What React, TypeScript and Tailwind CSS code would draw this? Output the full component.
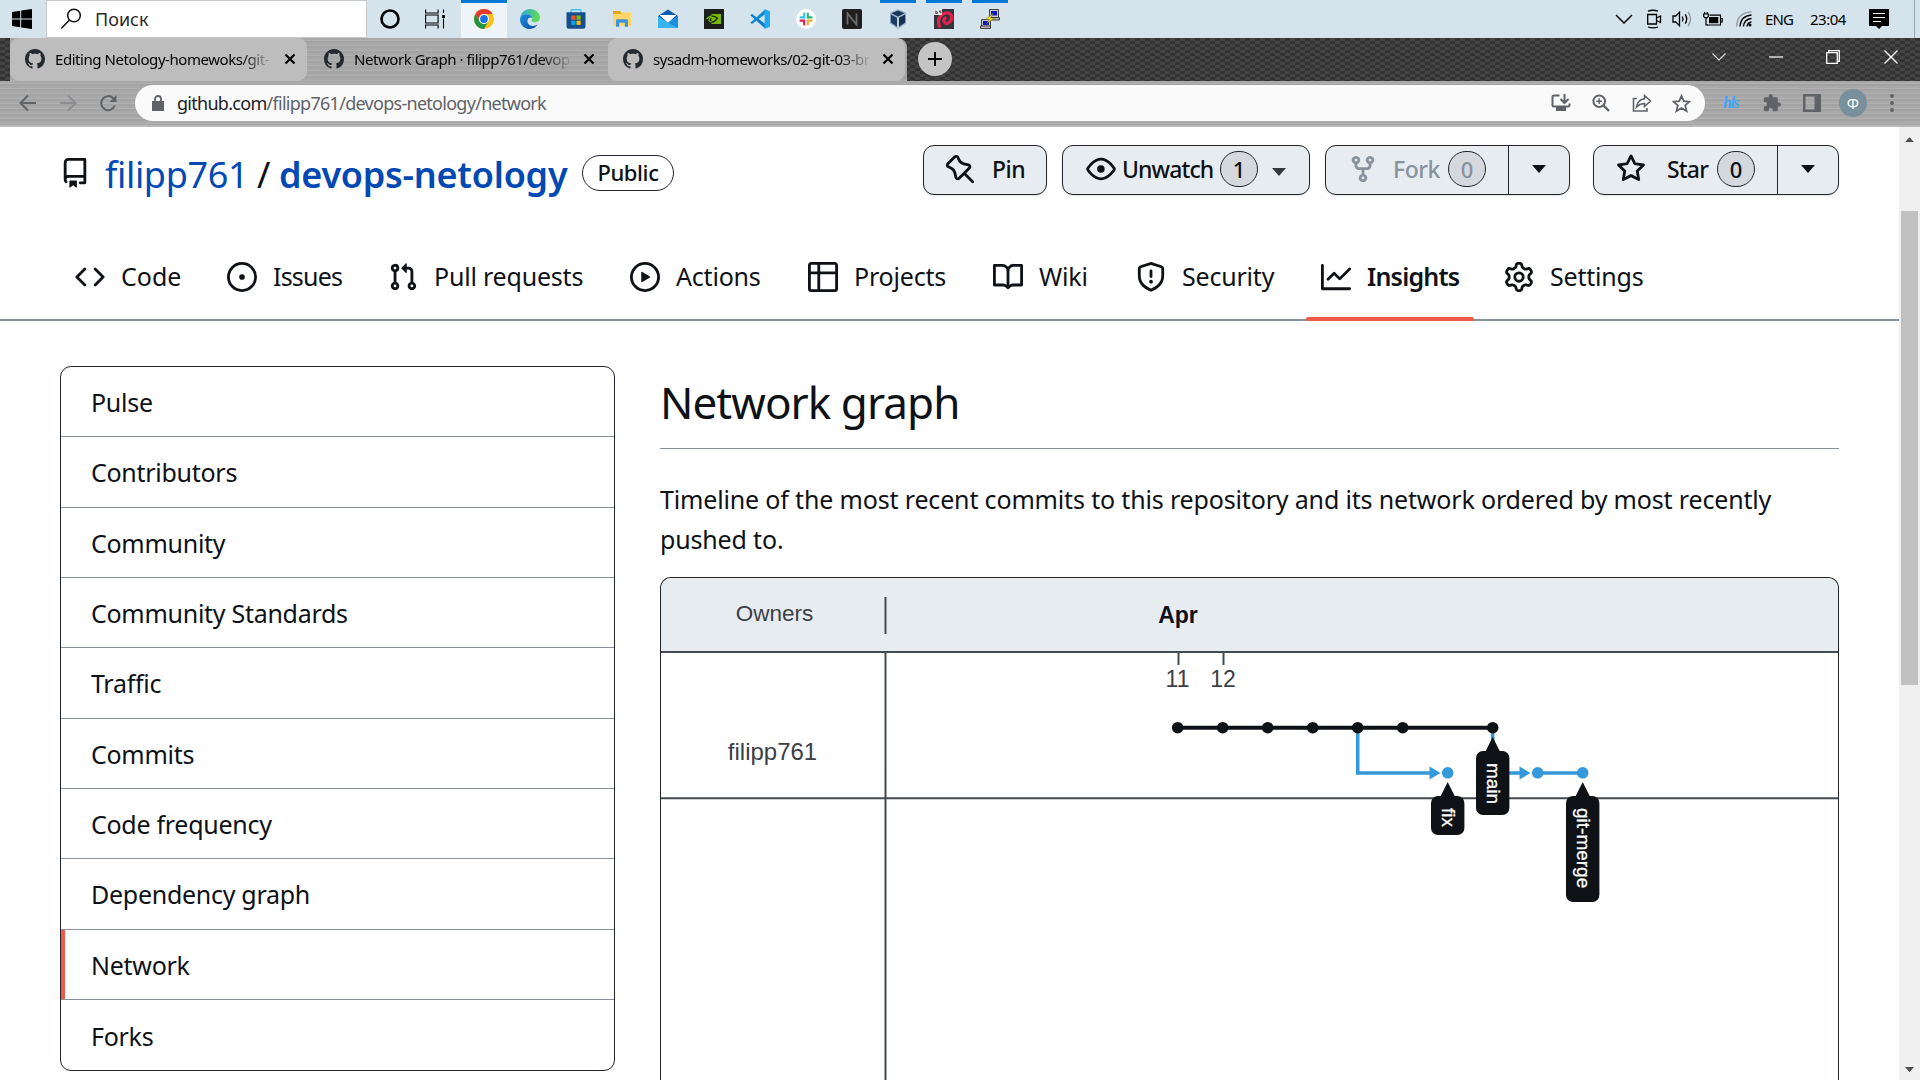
import type { ReactNode } from "react";

const octicons = {
  mark: "M8 0c4.42 0 8 3.58 8 8a8.013 8.013 0 0 1-5.45 7.59c-.4.08-.55-.17-.55-.38 0-.27.01-1.13.01-2.2 0-.75-.25-1.23-.54-1.48 1.78-.2 3.65-.88 3.65-3.95 0-.88-.31-1.59-.82-2.15.08-.2.36-1.02-.08-2.12 0 0-.67-.22-2.2.82-.64-.18-1.32-.27-2-.27-.68 0-1.36.09-2 .27-1.53-1.03-2.2-.82-2.2-.82-.44 1.1-.16 1.92-.08 2.12-.51.56-.82 1.28-.82 2.15 0 3.06 1.86 3.75 3.64 3.95-.23.2-.44.55-.51 1.07-.46.21-1.61.55-2.33-.66-.15-.24-.6-.83-1.23-.82-.67.01-.27.38.01.53.34.19.73.9.82 1.13.16.45.68 1.31 2.69.94 0 .67.01 1.3.01 1.49 0 .21-.15.45-.55.38A7.995 7.995 0 0 1 0 8c0-4.42 3.58-8 8-8Z",
  repo: "M2 2.5A2.5 2.5 0 0 1 4.5 0h8.75a.75.75 0 0 1 .75.75v12.5a.75.75 0 0 1-.75.75h-2.5a.75.75 0 0 1 0-1.5h1.75v-2h-8a1 1 0 0 0-.714 1.7.75.75 0 1 1-1.072 1.05A2.495 2.495 0 0 1 2 11.5Zm10.5-1h-8a1 1 0 0 0-1 1v6.708A2.486 2.486 0 0 1 4.5 9h8ZM5 12.25a.25.25 0 0 1 .25-.25h3.5a.25.25 0 0 1 .25.25v3.25a.25.25 0 0 1-.4.2l-1.45-1.087a.249.249 0 0 0-.3 0L5.4 15.7a.25.25 0 0 1-.4-.2Z",
  code: "m11.28 3.22 4.25 4.25a.75.75 0 0 1 0 1.06l-4.25 4.25a.749.749 0 0 1-1.275-.326.749.749 0 0 1 .215-.734L13.94 8l-3.72-3.72a.749.749 0 0 1 .326-1.275.749.749 0 0 1 .734.215Zm-6.56 0a.751.751 0 0 1 1.042.018.751.751 0 0 1 .018 1.042L2.06 8l3.72 3.72a.749.749 0 0 1-.326 1.275.749.749 0 0 1-.734-.215L.47 8.53a.75.75 0 0 1 0-1.06Z",
  issue: "M8 9.5a1.5 1.5 0 1 0 0-3 1.5 1.5 0 0 0 0 3ZM8 0a8 8 0 1 1 0 16A8 8 0 0 1 8 0ZM1.5 8a6.5 6.5 0 1 0 13 0 6.5 6.5 0 0 0-13 0Z",
  pull: "M1.5 3.25a2.25 2.25 0 1 1 3 2.122v5.256a2.251 2.251 0 1 1-1.5 0V5.372A2.25 2.25 0 0 1 1.5 3.25Zm5.677-.177L9.573.677A.25.25 0 0 1 10 .854V2.5h1A2.5 2.5 0 0 1 13.5 5v5.628a2.251 2.251 0 1 1-1.5 0V5a1 1 0 0 0-1-1h-1v1.646a.25.25 0 0 1-.427.177L7.177 3.427a.25.25 0 0 1 0-.354ZM3.75 2.5a.75.75 0 1 0 0 1.5.75.75 0 0 0 0-1.5Zm0 9.5a.75.75 0 1 0 0 1.5.75.75 0 0 0 0-1.5Zm8.25.75a.75.75 0 1 0 1.5 0 .75.75 0 0 0-1.5 0Z",
  play: "M8 0a8 8 0 1 1 0 16A8 8 0 0 1 8 0ZM1.5 8a6.5 6.5 0 1 0 13 0 6.5 6.5 0 0 0-13 0Zm4.879-2.773 4.264 2.559a.25.25 0 0 1 0 .428l-4.264 2.559A.25.25 0 0 1 6 10.559V5.442a.25.25 0 0 1 .379-.215Z",
  table: "M0 1.75C0 .784.784 0 1.75 0h12.5C15.216 0 16 .784 16 1.75v12.5A1.75 1.75 0 0 1 14.25 16H1.75A1.75 1.75 0 0 1 0 14.25ZM6.5 6.5v8h7.75a.25.25 0 0 0 .25-.25V6.5Zm8-1.5V1.75a.25.25 0 0 0-.25-.25H6.5V5Zm-13 1.5v7.75c0 .138.112.25.25.25H5v-8ZM5 5V1.5H1.75a.25.25 0 0 0-.25.25V5Z",
  book: "M0 1.75A.75.75 0 0 1 .75 1h4.253c1.227 0 2.317.59 3 1.501A3.743 3.743 0 0 1 11.006 1h4.245a.75.75 0 0 1 .75.75v10.5a.75.75 0 0 1-.75.75h-4.507a2.25 2.25 0 0 0-1.591.659l-.622.621a.75.75 0 0 1-1.06 0l-.622-.621A2.25 2.25 0 0 0 5.258 13H.75a.75.75 0 0 1-.75-.75Zm7.251 10.324.004-5.073-.002-2.253A2.25 2.25 0 0 0 5.003 2.5H1.5v9h3.757a3.75 3.75 0 0 1 1.994.574ZM8.755 4.75l-.004 7.322a3.752 3.752 0 0 1 1.992-.572H14.5v-9h-3.495a2.25 2.25 0 0 0-2.25 2.25Z",
  shield: "M7.467.133a1.748 1.748 0 0 1 1.066 0l5.25 1.68A1.75 1.75 0 0 1 15 3.48V7c0 1.566-.32 3.182-1.303 4.682-.983 1.498-2.585 2.813-5.032 3.855a1.697 1.697 0 0 1-1.33 0c-2.447-1.042-4.049-2.357-5.032-3.855C1.32 10.182 1 8.566 1 7V3.48a1.75 1.75 0 0 1 1.217-1.667Zm.61 1.429a.25.25 0 0 0-.153 0l-5.25 1.68a.25.25 0 0 0-.174.238V7c0 1.358.275 2.666 1.057 3.86.784 1.194 2.121 2.34 4.366 3.297a.196.196 0 0 0 .154 0c2.245-.956 3.582-2.104 4.366-3.298C13.225 9.666 13.5 8.36 13.5 7V3.48a.251.251 0 0 0-.174-.237l-5.25-1.68ZM8.75 4.75v3a.75.75 0 0 1-1.5 0v-3a.75.75 0 0 1 1.5 0ZM9 10.5a1 1 0 1 1-2 0 1 1 0 0 1 2 0Z",
  graph: "M1.5 1.75V13.5h13.75a.75.75 0 0 1 0 1.5H.75a.75.75 0 0 1-.75-.75V1.75a.75.75 0 0 1 1.5 0Zm14.28 2.53-5.25 5.25a.75.75 0 0 1-1.06 0L7 7.06 4.28 9.78a.751.751 0 0 1-1.042-.018.751.751 0 0 1-.018-1.042l3.25-3.25a.75.75 0 0 1 1.06 0L10 7.94l4.72-4.72a.751.751 0 0 1 1.042.018.751.751 0 0 1 .018 1.042Z",
  gear: "M8 0a8.2 8.2 0 0 1 .701.031C9.444.095 9.99.645 10.16 1.29l.288 1.107c.018.066.079.158.212.224.231.114.454.243.668.386.123.082.233.09.299.071l1.103-.303c.644-.176 1.392.021 1.82.63.27.385.506.792.704 1.218.315.675.111 1.422-.364 1.891l-.814.806c-.049.048-.098.147-.088.294.016.257.016.515 0 .772-.01.147.038.246.088.294l.814.806c.475.469.679 1.216.364 1.891a7.977 7.977 0 0 1-.704 1.217c-.428.61-1.176.807-1.82.63l-1.102-.302c-.067-.019-.177-.011-.3.071a5.909 5.909 0 0 1-.668.386c-.133.066-.194.158-.211.224l-.29 1.106c-.168.646-.715 1.196-1.458 1.26a8.006 8.006 0 0 1-1.402 0c-.743-.064-1.289-.614-1.458-1.26l-.289-1.106c-.018-.066-.079-.158-.212-.224a5.738 5.738 0 0 1-.668-.386c-.123-.082-.233-.09-.299-.071l-1.103.303c-.644.176-1.392-.021-1.82-.63a8.12 8.12 0 0 1-.704-1.218c-.315-.675-.111-1.422.363-1.891l.815-.806c.05-.048.098-.147.088-.294a6.214 6.214 0 0 1 0-.772c.01-.147-.038-.246-.088-.294l-.815-.806C.635 6.045.431 5.298.746 4.623a7.92 7.92 0 0 1 .704-1.217c.428-.61 1.176-.807 1.82-.63l1.102.302c.067.019.177.011.3-.071.214-.143.437-.272.668-.386.133-.066.194-.158.211-.224l.29-1.106C6.009.645 6.556.095 7.299.03 7.53.01 7.764 0 8 0Zm-.571 1.525c-.036.003-.108.036-.137.146l-.289 1.105c-.147.561-.549.967-.998 1.189-.173.086-.34.183-.5.29-.417.278-.97.423-1.529.27l-1.103-.303c-.109-.03-.175.016-.195.045-.22.312-.412.644-.573.99-.014.031-.021.11.059.19l.815.806c.411.406.562.957.53 1.456a4.709 4.709 0 0 0 0 .582c.032.499-.119 1.05-.53 1.456l-.815.806c-.081.08-.073.159-.059.19.162.346.353.677.573.989.02.03.085.076.195.046l1.102-.303c.56-.153 1.113-.008 1.53.27.161.107.328.204.501.29.447.222.85.629.997 1.189l.289 1.105c.029.109.101.143.137.146a6.6 6.6 0 0 0 1.142 0c.036-.003.108-.036.137-.146l.289-1.105c.147-.561.549-.967.998-1.189.173-.086.34-.183.5-.29.417-.278.97-.423 1.529-.27l1.103.303c.109.029.175-.016.195-.045.22-.313.411-.644.573-.99.014-.031.021-.11-.059-.19l-.815-.806c-.411-.406-.562-.957-.53-1.456a4.709 4.709 0 0 0 0-.582c-.032-.499.119-1.05.53-1.456l.815-.806c.081-.08.073-.159.059-.19a6.464 6.464 0 0 0-.573-.989c-.02-.03-.085-.076-.195-.046l-1.102.303c-.56.153-1.113.008-1.53-.27a4.44 4.44 0 0 0-.501-.29c-.447-.222-.85-.629-.997-1.189l-.289-1.105c-.029-.11-.101-.143-.137-.146a6.6 6.6 0 0 0-1.142 0ZM11 8a3 3 0 1 1-6 0 3 3 0 0 1 6 0ZM9.5 8a1.5 1.5 0 1 0-3.001.001A1.5 1.5 0 0 0 9.5 8Z",
  pin: "m11.294.984 3.722 3.722a1.75 1.75 0 0 1-.504 2.826l-1.327.613a3.089 3.089 0 0 0-1.707 2.084l-.584 2.454c-.317 1.332-1.972 1.8-2.94.832L5.75 11.311 1.78 15.28a.749.749 0 1 1-1.06-1.06l3.969-3.97-2.204-2.204c-.968-.968-.5-2.623.832-2.94l2.454-.584a3.08 3.08 0 0 0 2.084-1.707l.613-1.327a1.75 1.75 0 0 1 2.826-.504ZM6.283 9.723l2.732 2.731a.25.25 0 0 0 .42-.119l.584-2.454a4.586 4.586 0 0 1 2.537-3.098l1.328-.613a.25.25 0 0 0 .072-.404l-3.722-3.722a.25.25 0 0 0-.404.072l-.613 1.328a4.584 4.584 0 0 1-3.098 2.537l-2.454.584a.25.25 0 0 0-.119.42l2.731 2.732Z",
  eye: "M8 2c1.981 0 3.671.992 4.933 2.078 1.27 1.091 2.187 2.345 2.637 3.023a1.62 1.62 0 0 1 0 1.798c-.45.678-1.367 1.932-2.637 3.023C11.67 13.008 9.981 14 8 14c-1.981 0-3.671-.992-4.933-2.078C1.797 10.83.88 9.576.43 8.898a1.62 1.62 0 0 1 0-1.798c.45-.677 1.367-1.931 2.637-3.022C4.33 2.992 6.019 2 8 2ZM1.679 7.932a.12.12 0 0 0 0 .136c.411.622 1.241 1.75 2.366 2.717C5.176 11.758 6.527 12.5 8 12.5c1.473 0 2.825-.742 3.955-1.715 1.124-.967 1.954-2.096 2.366-2.717a.12.12 0 0 0 0-.136c-.412-.621-1.242-1.75-2.366-2.717C10.824 4.242 9.473 3.5 8 3.5c-1.473 0-2.825.742-3.955 1.715-1.124.967-1.954 2.096-2.366 2.717ZM8 10a2 2 0 1 1-.001-3.999A2 2 0 0 1 8 10Z",
  fork: "M5 5.372v.878c0 .414.336.75.75.75h4.5a.75.75 0 0 0 .75-.75v-.878a2.25 2.25 0 1 1 1.5 0v.878a2.25 2.25 0 0 1-2.25 2.25h-1.5v2.128a2.251 2.251 0 1 1-1.5 0V8.5h-1.5A2.25 2.25 0 0 1 3.5 6.25v-.878a2.25 2.25 0 1 1 1.5 0ZM5 3.25a.75.75 0 1 0-1.5 0 .75.75 0 0 0 1.5 0Zm6.75.75a.75.75 0 1 0 0-1.5.75.75 0 0 0 0 1.5Zm-3 8.75a.75.75 0 1 0-1.5 0 .75.75 0 0 0 1.5 0Z",
  star: "M8 .25a.75.75 0 0 1 .673.418l1.882 3.815 4.21.612a.75.75 0 0 1 .416 1.279l-3.046 2.97.719 4.192a.751.751 0 0 1-1.088.791L8 12.347l-3.766 1.98a.75.75 0 0 1-1.088-.79l.72-4.194L.818 6.374a.75.75 0 0 1 .416-1.28l4.21-.611L7.327.668A.75.75 0 0 1 8 .25Zm0 2.445L6.615 5.5a.75.75 0 0 1-.564.41l-3.097.45 2.24 2.184a.75.75 0 0 1 .216.664l-.528 3.084 2.769-1.456a.75.75 0 0 1 .698 0l2.77 1.456-.53-3.084a.75.75 0 0 1 .216-.664l2.24-2.183-3.096-.45a.75.75 0 0 1-.564-.41L8 2.694Z",
};

type OcticonName = keyof typeof octicons;

function Octicon({ name, className = "size-[30px]" }: { name: OcticonName; className?: string }) {
  return (
    <svg viewBox="0 0 16 16" fill="currentColor" className={`shrink-0 ${className}`}>
      <path d={octicons[name]} />
    </svg>
  );
}

/* ---------- Windows taskbar ---------- */

function TaskSlot({ state = "idle", width = "w-[46px]", children }: { state?: "idle" | "open" | "active"; width?: string; children: ReactNode }) {
  return (
    <div className={`relative flex h-[38px] items-center justify-center ${width} ${state === "active" ? "ml-1 bg-[#eef4f8]" : ""}`}>
      {state === "active" && <div className="absolute inset-x-0 top-0 h-[3px] bg-[#0078d7]" />}
      {state === "open" && <div className="absolute inset-x-[5px] top-0 h-[3px] bg-[#0078d7]" />}
      {children}
    </div>
  );
}

function TaskIcons() {
  return (
    <>
      <TaskSlot>
        <svg viewBox="0 0 20 20" className="size-5"><circle cx="10" cy="10" r="8.5" fill="none" stroke="#000" strokeWidth="2.6" /></svg>
      </TaskSlot>
      <TaskSlot width="w-[44px]">
        <svg viewBox="0 0 20 20" className="size-5" fill="none" stroke="#000" strokeWidth="1.1">
          <path d="M.6 .5v3.500h12.500V.500M.6 19.500v-3.500h12.500v3.500M.6 6h12.500v8H.600ZM18.500 .500v3.500M18.500 9.500v10" />
          <path d="M18.500 6v3" strokeWidth="2.800" />
        </svg>
      </TaskSlot>
      <TaskSlot state="active">
        <svg viewBox="0 0 20 20" className="size-5">
          <circle cx="10" cy="10" r="10" fill="#fbc116" />
          <path d="M10 0A10 10 0 0 1 18.660 5H10A5 5 0 0 0 5.670 12.500L1.340 5A10 10 0 0 1 10 0Z" fill="#e33b2e" />
          <path d="M1.340 5A10 10 0 0 0 10 20l4.330-7.500A5 5 0 0 1 5.670 12.500Z" fill="#229342" />
          <circle cx="10" cy="10" r="5" fill="#fff" />
          <circle cx="10" cy="10" r="3.900" fill="#1a73e8" />
        </svg>
      </TaskSlot>
      <TaskSlot>
        <svg viewBox="0 0 20 20" className="size-5">
          <defs>
            <linearGradient id="edgeA" x1="0" y1="0" x2="1" y2=".3"><stop offset="0" stopColor="#2aa5dc" /><stop offset="1" stopColor="#5fdb5a" /></linearGradient>
            <linearGradient id="edgeB" x1="0" y1="0" x2="1" y2="1"><stop offset="0" stopColor="#1b8fdd" /><stop offset="1" stopColor="#0c4fa0" /></linearGradient>
          </defs>
          <path d="M.300 8.500C1 3.500 5.200 0 10 0c5.800 0 10 4.300 10 8.300 0 3.200-2.500 5-5.300 5-2.200 0-3.200-.900-3.200-1.500 0-.500.900-1 .900-2.600C12.400 7 9.500 5.200 6.300 5.200 3.300 5.200 1.200 6.700.300 8.500Z" fill="url(#edgeA)" />
          <path d="M.100 10C.300 7 3 5.200 6.300 5.200c3.200 0 6.100 1.800 6.100 4C11 7.800 7.400 8.500 7.400 12c0 3.500 3.800 6 8 4.600.800-.300 1.600-.700 2.200-1C16 18.300 13 20 10 20 4.500 20-.300 15.500.100 10Z" fill="url(#edgeB)" />
        </svg>
      </TaskSlot>
      <TaskSlot>
        <svg viewBox="0 0 20 20" className="size-5">
          <path d="M5 4V1.500Q5 .700 5.800.700h8.400q.800 0 .800.800V4" fill="none" stroke="#3cc3f2" strokeWidth="1.400" />
          <path d="M.500 3.300h19v14.200q0 2.300-2.300 2.300H2.800Q.500 19.800.500 17.500Z" fill="#174e8e" />
          <path d="M5.300 6.500h4.200v4.200H5.300Z" fill="#f35325" /><path d="M10.500 6.500h4.200v4.200h-4.200Z" fill="#81bc06" />
          <path d="M5.300 11.700h4.200v4.200H5.300Z" fill="#05a6f0" /><path d="M10.500 11.700h4.200v4.200h-4.200Z" fill="#ffba08" />
        </svg>
      </TaskSlot>
      <TaskSlot>
        <svg viewBox="0 0 20 20" className="size-5">
          <path d="M1 2h7l1.500 2.500H19V17H1Z" fill="#e5a50f" /><path d="M1 5h8l1.500-1.500H19V17H1Z" fill="#ffd667" />
          <path d="M4 17.800v-6.300q0-1.300 1.300-1.300h9.400q1.300 0 1.300 1.300v6.300h-3.200v-4H7.200v4Z" fill="#3a94dd" />
        </svg>
      </TaskSlot>
      <TaskSlot>
        <svg viewBox="0 0 20 20" className="size-5">
          <path d="M0 7 10 .500 20 7v12H0Z" fill="#0f5fae" /><path d="M1.500 6h17L10 14Z" fill="#fff" />
          <path d="M0 7 10 13.700 20 7V19H0Z" fill="#36b3f0" /><path d="M20 7V19L10 13.700Z" fill="#1c8fdd" />
        </svg>
      </TaskSlot>
      <TaskSlot>
        <svg viewBox="0 0 20 20" className="size-5">
          <path d="M0 0h20v20H0Z" fill="#1d1f1c" /><path d="M7.500 5H17v10H7.500Z" fill="#76b900" />
          <path d="M2.500 10q4.500-5.500 11.500-1.500-3.500 5.500-7.500 4.200-2.500-1-1-3.200 2-2.300 4.500-1-.500 3-2.500 2" fill="none" stroke="#76b900" strokeWidth="1.200" />
          <path d="M7.500 7.200q3.500-.200 6 2-3 4.500-6 3.800" fill="none" stroke="#1d1f1c" strokeWidth="1.200" />
        </svg>
      </TaskSlot>
      <TaskSlot>
        <svg viewBox="0 0 20 20" className="size-5">
          <path d="M.300 6.300 2 4.900 15.200 15v4.500Z" fill="#0a7cc9" /><path d="M.300 13.700 2 15.100 15.200 5V.500Z" fill="#1087d3" />
          <path d="m14.600 0 5.400 2.300v15.400L14.600 20Z" fill="#23a9f2" />
        </svg>
      </TaskSlot>
      <TaskSlot>
        <svg viewBox="0 0 20 20" className="size-5">
          <circle cx="10" cy="10" r="10" fill="#fff" />
          <g strokeWidth="2.200" strokeLinecap="round">
            <path d="M8.200 4.500v4" stroke="#36c5f0" /><path d="M4.500 8.400h3.700" stroke="#36c5f0" />
            <path d="M11.800 4.500v4" stroke="#2eb67d" /><path d="M12 8.400h3.600" stroke="#2eb67d" />
            <path d="M11.800 11.800v3.700" stroke="#ecb22e" /><path d="M12 11.700h3.600" stroke="#ecb22e" />
            <path d="M8.200 11.800v3.700" stroke="#e01e5a" /><path d="M4.500 11.700h3.700" stroke="#e01e5a" />
          </g>
        </svg>
      </TaskSlot>
      <TaskSlot>
        <svg viewBox="0 0 20 20" className="size-5">
          <rect width="20" height="20" rx="2" fill="#1f1f1f" />
          <path d="M5.500 15.500v-11l9 11v-11" fill="none" stroke="#6f6f6f" strokeWidth="1.700" />
        </svg>
      </TaskSlot>
      <TaskSlot state="open">
        <svg viewBox="0 0 20 20" className="size-5">
          <path d="m10 .300 8 3.500V14.500L10 20l-8-5.500V3.800Z" fill="#9fb3ca" />
          <path d="m10 1.500 6.500 2.800L10 7.500 3.500 4.300Z" fill="#173659" />
          <path d="M2.800 5.500 9.300 9v9L2.800 13.500Z" fill="#1b3d66" /><path d="M17.200 5.500 10.700 9v9l6.500-4.500Z" fill="#14304f" />
          <path d="M9.300 9h1.400v9.500H9.300Z" fill="#e8eef5" />
        </svg>
      </TaskSlot>
      <TaskSlot state="open">
        <svg viewBox="0 0 20 20" className="size-5">
          <path d="M0 0h20v20H0Z" fill="#33363a" />
          <path d="M6 18.500Q2.500 11 7 6.500t9.500-1.500Q19.500 9.500 15.500 13t-5.500-.500Q9.500 9.500 12.500 8.500" fill="none" stroke="#e0234e" strokeWidth="3.200" />
          <path d="M0 0h8v6H0Z" fill="#e9e9e9" /><path d="M1.800 1.500v3h1.700v-1.500H2M5.500 1.500v1.500h1.300M6.800 1.500v3" stroke="#333" strokeWidth=".8" fill="none" />
        </svg>
      </TaskSlot>
      <TaskSlot state="open">
        <svg viewBox="0 0 20 20" className="size-5">
          <path d="M9.500.500h9v8h-9ZM1.500 10.500h9v7h-9Z" fill="#c8c8c8" stroke="#222" strokeWidth=".8" />
          <path d="M11 2h6v4.500h-6ZM3 12h6v4H3Z" fill="#0a14c8" />
          <path d="M10.500 8.500h9V11h-9ZM.500 17H10.500V19.500H.500Z" fill="#b5b5b5" stroke="#222" strokeWidth=".8" />
          <path d="M13.500 4 5.500 10.500h4L6 15l8.500-6h-4Z" fill="#ffee00" stroke="#554" strokeWidth=".5" />
        </svg>
      </TaskSlot>
    </>
  );
}

function Taskbar() {
  return (
    <div className="flex h-[38px] shrink-0 items-center bg-[#d4e3ec] text-black">
      <div className="flex w-[46px] pl-3">
        <svg viewBox="0 0 20 20" className="size-5">
          <path d="M0 3 8.200 1.800v7.700H0ZM9.200 1.600 20 0v9.500H9.200ZM0 10.500h8.200v7.700L0 17ZM9.200 10.500H20V20L9.200 18.400Z" />
        </svg>
      </div>
      <div className="flex h-[38px] w-[321px] items-center gap-[13px] border border-[#c6cacc] bg-white pl-[13px]">
        <svg viewBox="0 0 22 22" className="size-[22px]" fill="none" stroke="#111" strokeWidth="1.500">
          <circle cx="14" cy="7.500" r="6.300" /><path d="M9.500 12 1.200 20.600" />
        </svg>
        <span className="text-[18px] text-[#2b2b2b]">Поиск</span>
      </div>
      <div className="flex"><TaskIcons /></div>
      <div className="ml-auto flex h-[38px] items-center">
        <svg viewBox="0 0 18 10" className="mr-[13px] w-[18px]" fill="none" stroke="#000" strokeWidth="1.500"><path d="m1 1 8 8 8-8" /></svg>
        <svg viewBox="0 0 16 20" className="mr-[10px] w-4" fill="none" stroke="#000" strokeWidth="1.300">
          <path d="M1.700 5.500h8.800v9.500H1.700ZM10.500 9l4-2v6.500l-4-2M2 2.200Q7 .300 12 2.200M2 18Q7 19.700 12 18" />
        </svg>
        <svg viewBox="0 0 20 18" className="mr-[11px] w-5" fill="none" stroke="#000" strokeWidth="1.300">
          <path d="M1 6h2.800L7.500 2.300v13.400L3.800 12H1ZM10.300 6.500q1.500 2.500 0 5M13.200 4.300q3 4.700 0 9.400" /><path d="M16 2q5 7 0 14" stroke="#8b959c" />
        </svg>
        <svg viewBox="0 0 20 16" className="mr-[13px] w-5" fill="none" stroke="#000" strokeWidth="1.200">
          <path d="M6.500 4.200h11v9.800H4M17.500 7.500h1.700v3.500h-1.700" /><path d="M6 6h9.300v6.200H6Z" fill="#000" stroke="none" /><path d="M.700 3h4.600v2.500l-1 1.200H1.700l-1-1.200ZM1.700 1v2M4.300 1v2M3 6.500V14h2" />
        </svg>
        <svg viewBox="0 0 16 16" className="mr-[13px] w-4" fill="none" stroke="#000" strokeWidth="1.300">
          <path d="M.700 15.500Q1 1.500 15.500.800" stroke="#8b959c" /><path d="M4 15.500Q4.500 5 15.500 4M7.500 15.500Q8 8.300 15.500 7.500M11 15.500q.5-4 4.500-4.500" /><circle cx="14" cy="14" r="1.500" fill="#000" stroke="none" />
        </svg>
        <span className="mr-[16px] w-[29px] text-[15px] tracking-[-0.9px]">ENG</span>
        <span className="mr-[23px] w-9 text-[15px] tracking-[-0.5px]">23:04</span>
        <svg viewBox="0 0 20 20" className="mr-[25px] size-5"><path d="M0 0h20v17h-7l-3 3-3-3H0Z" /><path d="M4 4.500h12M4 8.500h12M4 12.500h8" stroke="#fff" strokeWidth="1.200" /></svg>
        <div className="mr-[5px] h-[38px] w-px bg-[#9aa7b0]" />
      </div>
    </div>
  );
}

/* ---------- Browser chrome ---------- */

function BrowserTab({ title, active = false }: { title: string; active?: boolean }) {
  return (
    <div className={`flex h-[43px] w-[297px] items-center rounded-t-[9px] pb-[2px] pl-[15px] ${active ? "bg-transparent" : "rounded-b-[9px] bg-[#bdbdbd]"}`}>
      <Octicon name="mark" className="size-5 text-[#24292f]" />
      <span className="ml-[10px] w-[219px] whitespace-nowrap bg-gradient-to-r from-black from-85% to-transparent bg-clip-text text-[15px] leading-6 tracking-[-0.45px] text-transparent">{title}</span>
      <svg viewBox="0 0 12 12" className="ml-[10px] w-3" stroke="#000" strokeWidth="2.200"><path d="m1.500 1.500 9 9M10.500 1.500l-9 9" /></svg>
    </div>
  );
}

function TabStrip() {
  return (
    <div className="flex h-[43px] shrink-0 bg-[repeating-conic-gradient(#333_0_25%,#444_0_50%)] bg-[length:10px_6px]">
      <div className="flex w-[907px] gap-[2px] rounded-tr-[9px] bg-[#a9a9a9] bg-[repeating-linear-gradient(180deg,#a8a8a8_0_2px,#afafaf_2px_3px,#a4a4a4_3px_5px)] bg-clip-content pl-[10px]">
        <BrowserTab title="Editing Netology-homewoks/git-" />
        <BrowserTab title="Network Graph · filipp761/devop" active />
        <BrowserTab title="sysadm-homeworks/02-git-03-br" />
      </div>
      <div className="ml-[11px] mt-[4px] flex size-[34px] items-center justify-center rounded-full bg-[#c4c4c4]">
        <svg viewBox="0 0 14 14" className="w-[14px]" stroke="#000" strokeWidth="2"><path d="M7 0v14M0 7h14" /></svg>
      </div>
      <div className="ml-auto flex h-[37px] items-center pr-[22px]">
        <svg viewBox="0 0 14 8" className="mr-[43px] w-[14px]" fill="none" stroke="#ddd" strokeWidth="1.200"><path d="m.5.500 6.500 6.500 6.500-6.500" /></svg>
        <svg viewBox="0 0 14 14" className="mr-[43px] w-[14px]" stroke="#fff" strokeWidth="1.200"><path d="M0 7h14" /></svg>
        <svg viewBox="0 0 14 14" className="mr-[44px] w-[14px]" fill="none" stroke="#fff" strokeWidth="1.300"><path d="M.700 2.700h10.600v10.600H.700ZM2.700 2.500V.700h10.600v10.600h-1.800" /></svg>
        <svg viewBox="0 0 14 14" className="w-[14px]" stroke="#fff" strokeWidth="1.400"><path d="m.5.500 13 13M13.500.500l-13 13" /></svg>
      </div>
    </div>
  );
}

function Toolbar() {
  return (
    <div className="flex h-[46px] shrink-0 items-center border-b-2 border-[#b9b9b9] bg-[repeating-linear-gradient(180deg,#a8a8a8_0_2px,#b0b0b0_2px_3px,#a3a3a3_3px_5px)] pl-[19px] text-[#5f6368]">
      <svg viewBox="0 0 18 18" className="mr-[22px] w-[18px]" fill="none" stroke="#5f6368" strokeWidth="2"><path d="M17 9H2M9 1.500 1.500 9 9 16.500" /></svg>
      <svg viewBox="0 0 18 18" className="mr-[22px] w-[18px]" fill="none" stroke="#8a8c8f" strokeWidth="2"><path d="M1 9h15M9 1.500 16.500 9 9 16.500" /></svg>
      <svg viewBox="0 0 18 18" className="mr-[18px] w-[18px]" fill="none" stroke="#5f6368" strokeWidth="2"><path d="M15.800 11.500A7 7 0 1 1 14 4l1.500 1.500" /><path d="M17.500 1v7h-7Z" fill="#5f6368" stroke="none" /></svg>
      <div className="flex h-[36px] w-[1570px] items-center rounded-full bg-[#fafafa] pl-[17px] pr-[14px]">
        <svg viewBox="0 0 12 16" className="mr-[13px] w-[12px]"><path d="M0 6h12v10H0Z" fill="#5f6368" /><path d="M3 7V4a3 3 0 0 1 6 0v3" fill="none" stroke="#5f6368" strokeWidth="1.800" /></svg>
        <span className="text-[18px] leading-6 tracking-[-0.72px] text-[#5f6368]"><span className="text-[#202124]">github.com</span>/filipp761/devops-netology/network</span>
        <div className="ml-auto flex items-center">
          <svg viewBox="0 0 20 18" className="mr-[21px] w-5" fill="none" stroke="#5f6368" strokeWidth="2"><path d="M8.500 1.500H3q-1.500 0-1.500 1.500v8q0 1.500 1.500 1.500h14q1.500 0 1.500-1.500V9.500M13.500 0v8M9.500 5l4 4 4-4" /><path d="M5 13h10v4H5Z" fill="#5f6368" stroke="none" /></svg>
          <svg viewBox="0 0 18 18" className="mr-[22px] w-[18px]" fill="none" stroke="#5f6368" strokeWidth="2"><circle cx="7.200" cy="7.200" r="5.800" /><path d="m11.500 11.500 5.500 5.500" strokeWidth="2.400" /><path d="M4.300 7.200h5.800M7.200 4.300v5.800" strokeWidth="1.400" /></svg>
          <svg viewBox="0 0 20 18" className="mr-[20px] w-5" fill="none" stroke="#5f6368" strokeWidth="1.600"><path d="M5 4.500H1.500V17H15v-3" /><path d="M12.500 1.500 18.500 7l-6 5.500V9.500Q8 9.500 4.500 13 6 5.500 12.500 4.800Z" /></svg>
          <svg viewBox="0 0 18 18" className="w-[19px]" fill="none" stroke="#5f6368" strokeWidth="1.700"><path d="m9 1.800 2.200 5 5.400.500-4.100 3.500 1.300 5.400L9 13.300l-4.800 2.900 1.300-5.400L1.400 7.300l5.400-.500Z" /></svg>
        </div>
      </div>
      <span className="ml-[18px] w-[24px] font-['Liberation_Serif',serif] text-[16px] font-bold italic tracking-[-1.5px] text-[#42a5f5]">hls</span>
      <svg viewBox="0 0 18 18" className="ml-[16px] w-[18px]" fill="#5f6368"><path d="M16 8.500h-1.200V4.600q0-1.400-1.400-1.400H9.800V2a2 2 0 0 0-4 0v1.200H2.200Q.800 3.200.800 4.600V8h1.200a2.100 2.100 0 0 1 0 4.200H.800v3.600q0 1.400 1.400 1.400h3.400V16a2.100 2.100 0 0 1 4.200 0v1.200h3.600q1.400 0 1.400-1.400v-3.300H16a2 2 0 0 0 0-4Z" /></svg>
      <svg viewBox="0 0 18 18" className="ml-[22px] w-[18px]"><path d="M0 0h18v18H0ZM2.500 2.500v13h9v-13Z" fill="#5f6368" fillRule="evenodd" /></svg>
      <div className="ml-[18px] flex size-7 items-center justify-center rounded-full bg-[#78909c] text-[15px] text-white">Ф</div>
      <svg viewBox="0 0 4 18" className="ml-[23px] h-[18px]" fill="#5f6368"><circle cx="2" cy="2" r="2" /><circle cx="2" cy="9" r="2" /><circle cx="2" cy="16" r="2" /></svg>
    </div>
  );
}

/* ---------- Repository page ---------- */

function Caret({ className = "w-[14px]" }: { className?: string }) {
  return <svg viewBox="0 0 14 8" className={`shrink-0 ${className}`} fill="currentColor"><path d="M0 0h14L7 8Z" /></svg>;
}

function Counter({ children }: { children: ReactNode }) {
  return <span className="flex h-9 w-[38px] shrink-0 items-center justify-center rounded-full border border-[#20252c] bg-[#d5d8dd] pb-px text-[22px] leading-none">{children}</span>;
}

const buttonBox = "flex h-[50px] items-center rounded-[11px] border border-[#20252c] bg-[#e7ecf0] pb-[2px] text-[23px] font-medium text-[#0e1116] shadow-[0_1px_2px_rgba(0,0,0,0.12)]";

function RepoHeader() {
  return (
    <div className="flex h-[68px] items-start pl-[60px] pt-[18px]">
      <Octicon name="repo" className="mt-[13px] size-[30px] text-[#0e1116]" />
      <h2 className="ml-[15px] flex w-[464px] whitespace-nowrap text-[36px] leading-[60px]">
        <span className="w-[152px] tracking-[-0.35px] text-[#0349b4]">filipp761</span>
        <span className="w-[22px] text-[#0e1116]">/</span>
        <span className="font-semibold tracking-[-0.25px] text-[#0349b4]">devops-netology</span>
      </h2>
      <span className="ml-[13px] mt-[10px] flex h-9 w-[92px] items-center justify-center rounded-full border border-[#20252c] pb-[2px] text-[22px] font-medium tracking-[-0.4px] text-[#0e1116]">Public</span>
      <div className="ml-auto flex pr-[60px]">
        <div className={`${buttonBox} w-[124px] pl-[21px]`}>
          <Octicon name="pin" className="size-[30px] -scale-x-100" />
          <span className="ml-[17px] tracking-[-0.5px]">Pin</span>
        </div>
        <div className={`${buttonBox} ml-[15px] w-[248px] pl-[23px]`}>
          <Octicon name="eye" />
          <span className="ml-[6px] w-[98px] tracking-[-0.9px]">Unwatch</span>
          <Counter>1</Counter>
          <Caret className="ml-[14px] mt-[6px] w-[14px] text-[#33383e]" />
        </div>
        <div className={`${buttonBox} ml-[15px] w-[245px]`}>
          <div className="-mb-[2px] flex h-[48px] w-[183px] items-center border-r border-[#20252c] pb-[2px] pl-[22px] text-[#88929d]">
            <Octicon name="fork" />
            <span className="ml-[15px] w-[55px] tracking-[-0.5px]">Fork</span>
            <Counter>0</Counter>
          </div>
          <Caret className="ml-[23px] w-[14px]" />
        </div>
        <div className={`${buttonBox} ml-[23px] w-[246px]`}>
          <div className="-mb-[2px] flex h-[48px] w-[184px] items-center border-r border-[#20252c] pb-[2px] pl-[22px]">
            <Octicon name="star" />
            <span className="ml-[21px] w-[50px] tracking-[-0.8px]">Star</span>
            <Counter>0</Counter>
          </div>
          <Caret className="ml-[23px] w-[14px]" />
        </div>
      </div>
    </div>
  );
}

const navItems: { icon: OcticonName; label: string; width: string; tracking?: string }[] = [
  { icon: "code", label: "Code", width: "w-[152px]", tracking: "tracking-[0px]" },
  { icon: "issue", label: "Issues", width: "w-[161px]", tracking: "tracking-[-0.8px]" },
  { icon: "pull", label: "Pull requests", width: "w-[242px]" },
  { icon: "play", label: "Actions", width: "w-[178px]" },
  { icon: "table", label: "Projects", width: "w-[185px]" },
  { icon: "book", label: "Wiki", width: "w-[143px]" },
  { icon: "shield", label: "Security", width: "w-[185px]" },
  { icon: "graph", label: "Insights", width: "w-[183px]", tracking: "tracking-[-0.8px]" },
  { icon: "gear", label: "Settings", width: "w-[170px]" },
];

function RepoNav() {
  return (
    <nav className="flex h-[126px] border-b-2 border-[#88929d] pl-[75px] text-[25px] text-[#0e1116]">
      {navItems.map(({ icon, label, width, tracking = "tracking-[-0.2px]" }) => (
        <div key={label} className={`relative flex h-full items-center whitespace-nowrap pt-[40px] ${width} ${tracking} ${label === "Insights" ? "font-semibold" : ""}`}>
          <Octicon name={icon} />
          <span className="ml-[16px]">{label}</span>
          {label === "Insights" && <div className="absolute -bottom-[2px] -left-[15px] h-1 w-[168px] rounded-sm bg-[#ef5b48]" />}
        </div>
      ))}
    </nav>
  );
}

const menu = ["Pulse", "Contributors", "Community", "Community Standards", "Traffic", "Commits", "Code frequency", "Dependency graph", "Network", "Forks"];

function SideMenu() {
  return (
    <ul className="h-[705px] w-[555px] shrink-0 overflow-hidden rounded-[11px] border border-[#20252c] text-[25px] tracking-[-0.28px] text-[#0e1116]">
      {menu.map((label) => (
        <li key={label} className="relative flex h-[70.35px] items-center border-b border-[#88929d] pl-[30px] pt-[2px] last:border-b-0">
          {label === "Network" && <div className="absolute inset-y-0 left-0 w-1 bg-[#ef5b48]" />}
          {label}
        </li>
      ))}
    </ul>
  );
}

const mainCommits = [516.7, 561.7, 606.7, 651.7, 696.7, 741.7, 831.7];
const branchCommits = [786.7, 876.7, 921.7];
const refs = [
  { label: "fix", x: 786.7, top: 204, height: 53 },
  { label: "main", x: 831.7, top: 159, height: 78 },
  { label: "git-merge", x: 921.7, top: 204, height: 120 },
];

function NetworkGraph() {
  return (
    <svg viewBox="0 0 1177 502" className="h-[502px] w-[1177px] shrink-0 font-['Liberation_Sans',Arial,sans-serif]">
      <path d="M0 0h1177v74H0Z" fill="#e7ecf0" />
      <g stroke="#444a51" strokeWidth="2" fill="none">
        <path d="M0 74H1177M0 220.300H1177M224.500 74V502M224.500 19V56" />
        <path d="M517.500 75v12M562.500 75v12" />
      </g>
      <g textAnchor="middle" fontSize="22.500" fill="#3b4046">
        <text x="113.500" y="43">Owners</text>
        <text x="111.500" y="182" fontSize="24">filipp761</text>
        <text x="516.500" y="108.500" fontSize="23">11</text>
        <text x="562" y="108.500" fontSize="23">12</text>
        <text x="517" y="45" fontSize="23" fontWeight="bold" fill="#0e1116">Apr</text>
      </g>
      <path d="M516.700 149.700H831.700" stroke="#0e1116" strokeWidth="4" />
      <path d="M696.700 150V195H772M831.700 150V195H862M876.700 195H921.700" fill="none" stroke="#3498db" strokeWidth="3.600" />
      <path d="m768.500 188.500 11 6.500-11 6.500ZM858.500 188.500l11 6.500-11 6.500Z" fill="#3498db" />
      {mainCommits.map((x) => <circle key={x} cx={x} cy="149.700" r="5.800" fill="#0e1116" />)}
      {branchCommits.map((x) => <circle key={x} cx={x} cy="194.800" r="5.800" fill="#3498db" />)}
      {refs.map(({ label, x, top, height }) => (
        <g key={label}>
          <path d={`M${x} ${top}l8 16h-16Z`} fill="#0e1116" />
          <rect x={x - 16.700} y={top + 14} width="33.400" height={height - 14} rx="7" fill="#0e1116" />
          <text transform={`translate(${x - 5.500} ${top + 26}) rotate(90)`} fontSize="19" fill="#fff" stroke="#fff" strokeWidth=".3">{label}</text>
        </g>
      ))}
    </svg>
  );
}

function ScrollBar() {
  return (
    <div className="flex w-[21px] shrink-0 flex-col items-center bg-[#f0f0f0] text-[#505050]">
      <Caret className="mt-[10px] w-[9px] rotate-180" />
      <div className="mt-[69px] h-[474px] w-[17px] bg-[#c1c1c1]" />
      <Caret className="mt-auto mb-[8px] w-[9px]" />
    </div>
  );
}

export default function App() {
  return (
    <div className="flex h-[1080px] w-[1920px] flex-col overflow-hidden bg-white font-['Noto_Sans',sans-serif]">
      <Taskbar />
      <TabStrip />
      <Toolbar />
      <div className="flex h-[953px] overflow-hidden">
        <div className="w-[1899px] shrink-0">
          <RepoHeader />
          <RepoNav />
          <div className="flex pl-[60px] pt-[45px]">
            <SideMenu />
            <main className="ml-[45px] w-[1179px] text-[#0e1116]">
              <h1 className="h-[83px] border-b border-[#88929d] text-[44px] leading-[73px] tracking-[-0.95px]">Network graph</h1>
              <p className="mt-[30px] text-[25px] leading-10 tracking-[-0.16px]">
                Timeline of the most recent commits to this repository and its network ordered by most recently<br />pushed to.
              </p>
              <div className="mt-[18px] overflow-hidden rounded-t-[11px] border border-b-0 border-[#20252c]">
                <NetworkGraph />
              </div>
            </main>
          </div>
        </div>
        <ScrollBar />
      </div>
    </div>
  );
}
